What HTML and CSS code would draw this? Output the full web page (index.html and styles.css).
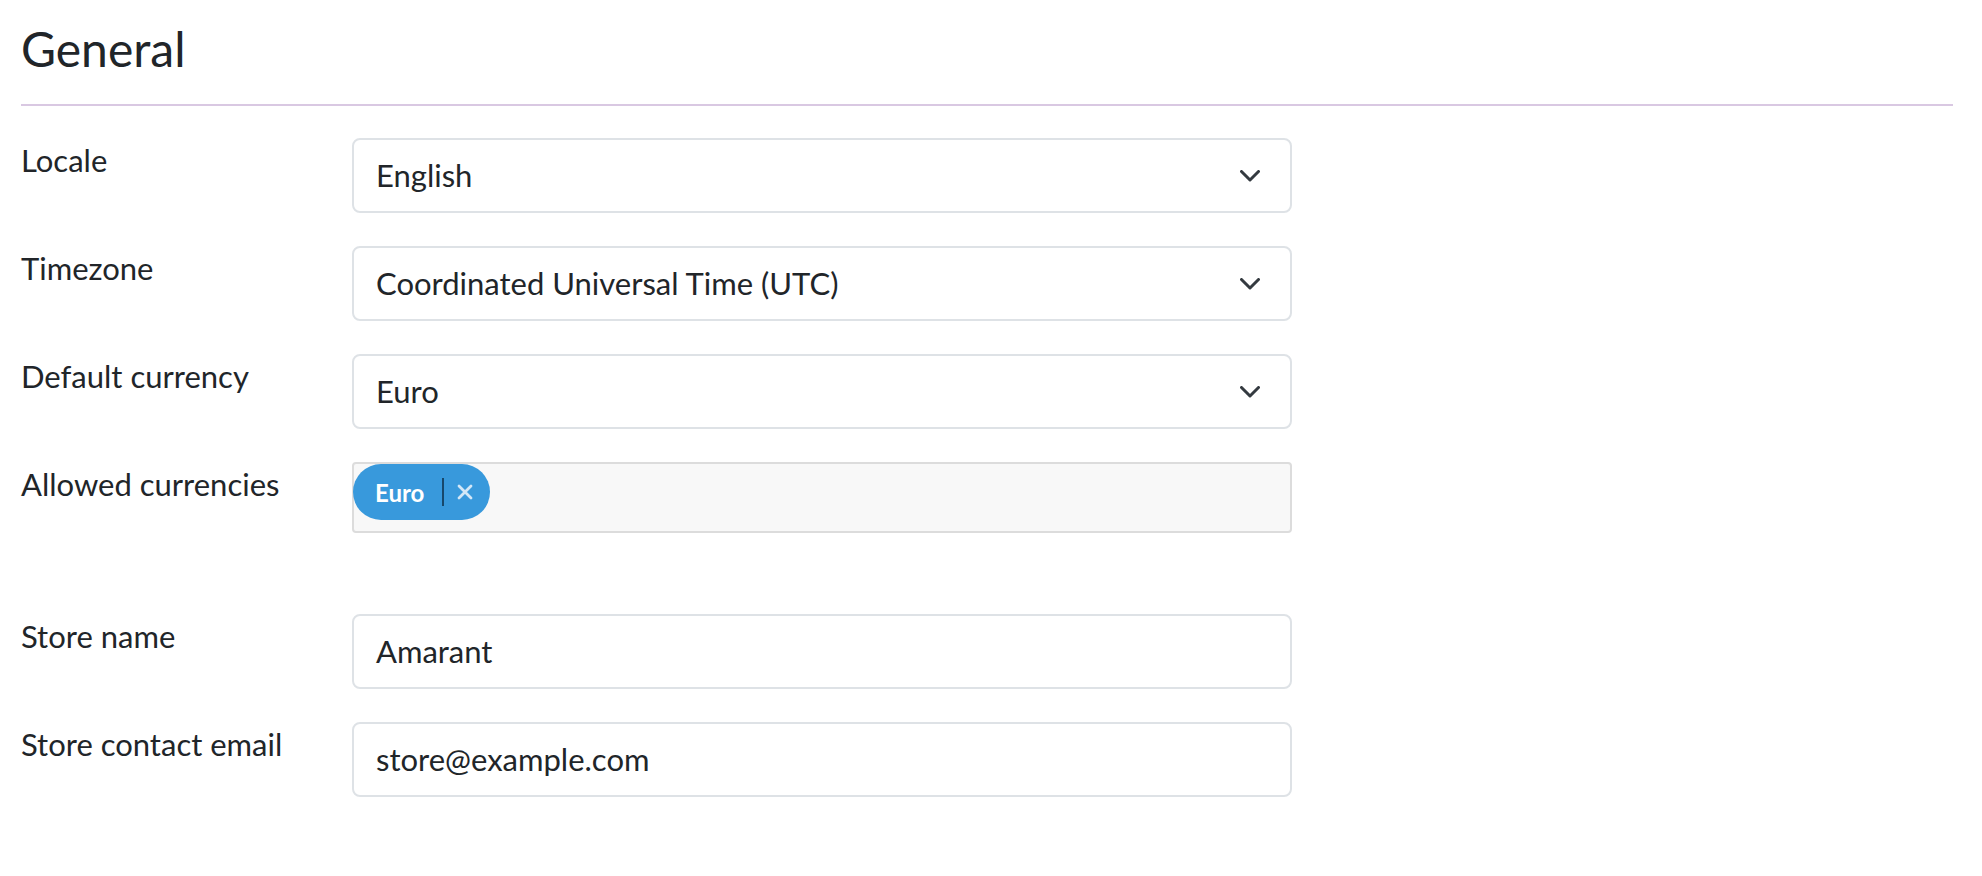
FILE: index.html
```html
<!DOCTYPE html>
<html lang="en">
<head>
<meta charset="utf-8">
<title>General settings</title>
<link rel="stylesheet" href="styles.css">
</head>
<body>
<div class="page">
  <h2 class="title">General</h2>
  <form class="settings">
    <div class="row">
      <label class="label">Locale</label>
      <div class="control select"><span class="value">English</span><svg class="chevron" width="20" height="12" viewBox="0 0 20 12"><path d="M1.5 1.5 L10 10 L18.5 1.5" fill="none" stroke="#343a40" stroke-width="3" stroke-linecap="round" stroke-linejoin="round"/></svg></div>
    </div>
    <div class="row">
      <label class="label">Timezone</label>
      <div class="control select"><span class="value">Coordinated Universal Time (UTC)</span><svg class="chevron" width="20" height="12" viewBox="0 0 20 12"><path d="M1.5 1.5 L10 10 L18.5 1.5" fill="none" stroke="#343a40" stroke-width="3" stroke-linecap="round" stroke-linejoin="round"/></svg></div>
    </div>
    <div class="row">
      <label class="label">Default currency</label>
      <div class="control select"><span class="value">Euro</span><svg class="chevron" width="20" height="12" viewBox="0 0 20 12"><path d="M1.5 1.5 L10 10 L18.5 1.5" fill="none" stroke="#343a40" stroke-width="3" stroke-linecap="round" stroke-linejoin="round"/></svg></div>
    </div>
    <div class="row row-multi">
      <label class="label">Allowed currencies</label>
      <div class="multi">
        <span class="chip"><span class="chip-text">Euro</span><span class="chip-sep"></span><svg class="chip-x" width="16" height="16" viewBox="0 0 16 16"><path d="M2 2 L14 14 M14 2 L2 14" stroke="#d2e7f7" stroke-width="2.8" stroke-linecap="round"/></svg></span>
      </div>
    </div>
    <div class="row">
      <label class="label">Store name</label>
      <div class="control input"><span class="value">Amarant</span></div>
    </div>
    <div class="row">
      <label class="label">Store contact email</label>
      <div class="control input"><span class="value">store@example.com</span></div>
    </div>
  </form>
</div>
</body>
</html>
```

FILE: styles.css
```css
html, body {
  margin: 0;
  padding: 0;
  background: #ffffff;
}
body {
  font-family: Lato, "Noto Sans", "DejaVu Sans", sans-serif;
  color: #212529;
}
.page {
  padding: 0 29px 0 21px;
}
.title {
  margin: 0;
  padding: 20px 0 26px;
  font-size: 48px;
  line-height: 58px;
  font-weight: 400;
  border-bottom: 2px solid #d9c8e2;
}
.settings {
  margin-top: 32px;
}
.row {
  display: grid;
  grid-template-columns: 331px 940px;
  margin-bottom: 33px;
}
.row-multi {
  margin-bottom: 81px;
}
.label {
  font-size: 31px;
  line-height: 45px;
  color: #212529;
}
.control {
  box-sizing: border-box;
  height: 75px;
  border: 2px solid #dee2e6;
  border-radius: 8px;
  display: flex;
  align-items: center;
  padding: 0 30px 0 22px;
  background: #fff;
}
.value {
  flex: 1;
  font-size: 31px;
  line-height: 1.2;
  color: #212529;
}
.chevron {
  flex: none;
}
.multi {
  box-sizing: border-box;
  height: 71px;
  border: 2px solid #dcdcdc;
  border-radius: 4px;
  background: #f8f8f8;
  display: flex;
  align-items: flex-start;
}
.chip {
  display: inline-flex;
  align-items: center;
  height: 56px;
  margin-left: -1px;
  padding: 0 17px 0 22px;
  background: #3899dc;
  border-radius: 28px;
}
.chip-text {
  color: #ffffff;
  font-size: 24px;
  font-weight: 700;
}
.chip-sep {
  width: 2px;
  height: 28px;
  background: #17486b;
  margin: 0 13px 0 18px;
}
.chip-x {
  display: block;
}
```
